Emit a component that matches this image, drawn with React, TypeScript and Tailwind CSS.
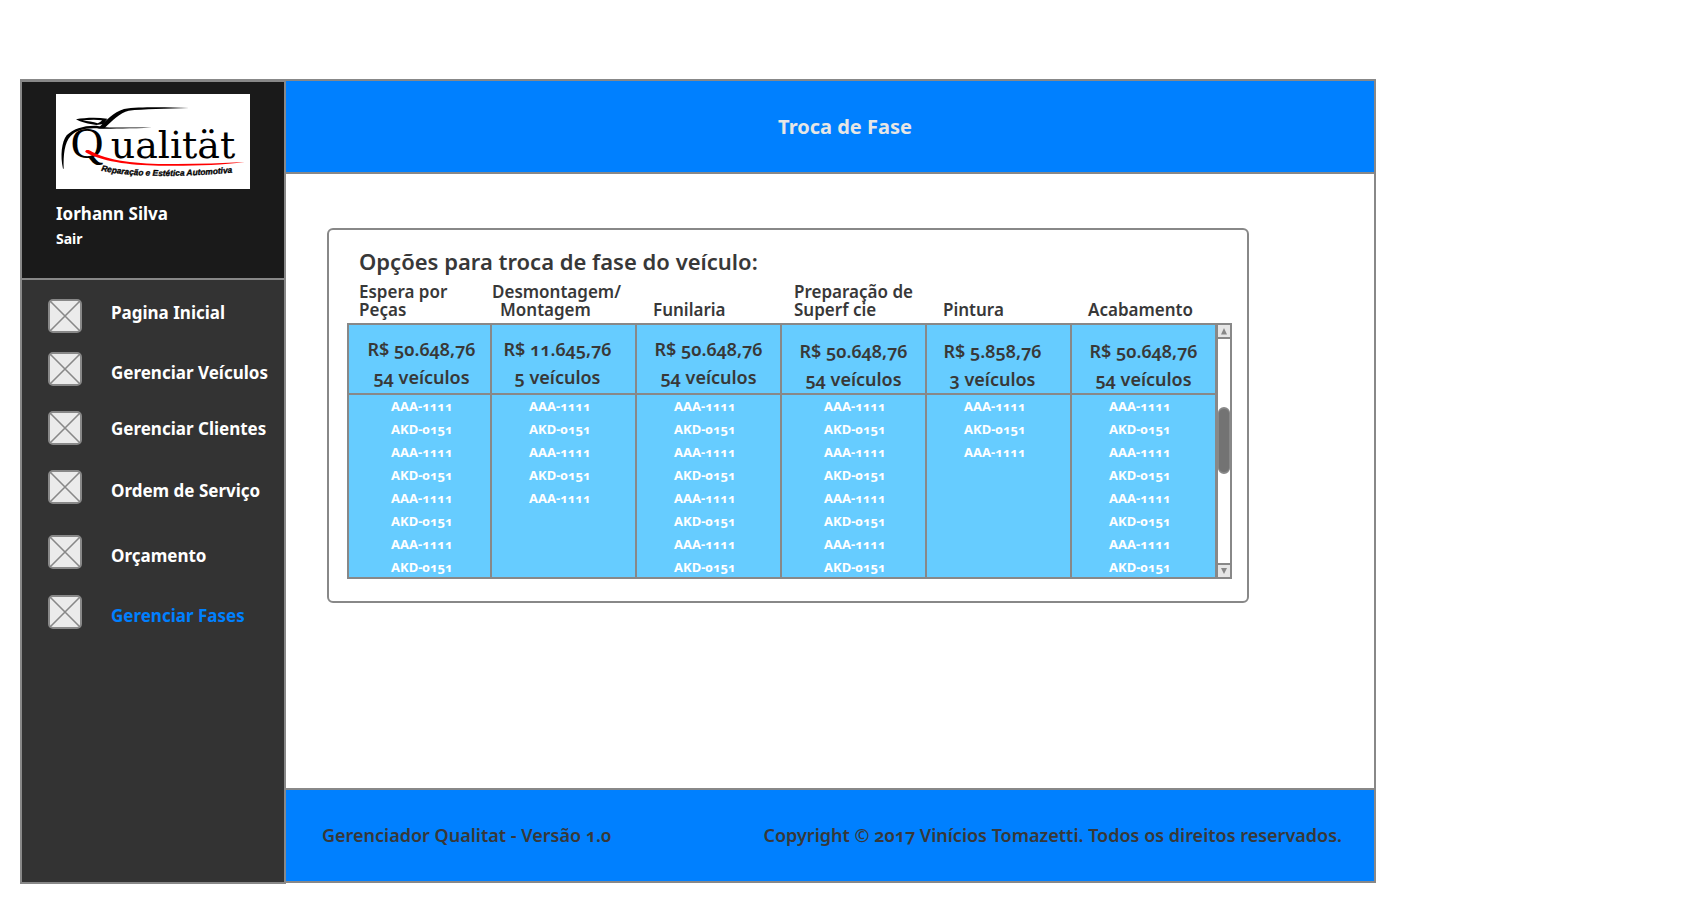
type NavItem = { label: string; row: string; text: string; active?: boolean };

const nav: NavItem[] = [
  { label: "Pagina Inicial", row: "mt-[19px]", text: "pb-1.5" },
  { label: "Gerenciar Veículos", row: "mt-[19px]", text: "pt-2" },
  { label: "Gerenciar Clientes", row: "mt-[25px]", text: "pt-0.5" },
  { label: "Ordem de Serviço", row: "mt-[25px]", text: "pt-2" },
  { label: "Orçamento", row: "mt-[31px]", text: "pt-2" },
  { label: "Gerenciar Fases", row: "mt-[26px]", text: "pt-2", active: true },
];

type Phase = {
  title: string[];
  head: string;
  amount: string;
  vehicles: string;
  summary: string;
  list: string;
  count: number;
};

const phases: Phase[] = [
  { title: ["Espera por", "Peças"], head: "pl-3", amount: "R$ 50.648,76", vehicles: "54 veículos", summary: "pt-2.5 pl-1", list: "pl-[42px]", count: 8 },
  { title: ["Desmontagem/", "Montagem"], head: "pl-0", amount: "R$ 11.645,76", vehicles: "5 veículos", summary: "pt-2.5 pr-3", list: "pl-[37px]", count: 5 },
  { title: ["Funilaria"], head: "pl-4", amount: "R$ 50.648,76", vehicles: "54 veículos", summary: "pt-2.5", list: "pl-[37px]", count: 8 },
  { title: ["Preparação de", "Superf cie"], head: "pl-3", amount: "R$ 50.648,76", vehicles: "54 veículos", summary: "pt-3", list: "pl-[42px]", count: 8 },
  { title: ["Pintura"], head: "pl-4", amount: "R$ 5.858,76", vehicles: "3 veículos", summary: "pt-3 pr-3", list: "pl-[37px]", count: 3 },
  { title: ["Acabamento"], head: "pl-4", amount: "R$ 50.648,76", vehicles: "54 veículos", summary: "pt-3", list: "pl-[37px]", count: 8 },
];

const plates = ["AAA-1111", "AKD-0151"];

function Logo() {
  return (
    <svg viewBox="18 18 582 285" className="block w-[194px] h-[95px] bg-white" role="img" aria-label="Qualität">
      <path d="M39 242 C30 205 35 160 50 142 C70 122 100 112 140 113 L158 117 C190 120 240 117 306 119 C240 121 190 122 150 122 C110 118 80 126 62 144 C43 165 40 200 41 242 Z" fill="#000" />
      <path d="M144 121 C168 98 190 72 222 63 C270 56 350 58 417 60 C350 63 280 63 236 68 C210 74 186 98 163 121 Z" fill="#000" />
      <path d="M78 94 C105 89 140 88 172 92 L160 108 L139 111 C116 108 92 103 78 94 Z M98 97 C112 101 130 101 143 106 C150 103 154 100 156 97 C140 94 118 95 98 97 Z" fill="#000" fillRule="evenodd" />
      <text x="62" y="210" fontFamily="'Liberation Serif', serif" fontSize="136" fontWeight="400" fill="#000">Q</text>
      <text x="182" y="209" fontFamily="'DejaVu Serif', serif" fontSize="114" fontWeight="400" fill="#000">ualität</text>
      <path d="M106 190 C108 184 118 186 126 191 C190 224 280 228 380 228 C450 228 520 226 584 222 C520 231 450 233 370 233 C270 235 170 226 112 196 C108 194 105 193 106 190 Z" fill="#f00" />
      <path id="tagline" d="M153 248 C240 268 400 268 545 254" fill="none" />
      <text fontFamily="'Liberation Sans', sans-serif" fontSize="25" fontWeight="700" fontStyle="italic" fill="#000" stroke="#000" strokeWidth="1">
        <textPath href="#tagline">Reparação e Estética Automotiva</textPath>
      </text>
    </svg>
  );
}

function CrossBox() {
  return (
    <svg viewBox="0 0 34 34" className="h-[34px] w-[34px] shrink-0" aria-hidden="true">
      <rect x="1" y="1" width="32" height="32" rx="4" fill="#ebebeb" stroke="#888" strokeWidth="2" />
      <path d="M2 2 L32 32 M32 2 L2 32" stroke="#888" strokeWidth="1.6" />
    </svg>
  );
}

function ScrollBar() {
  return (
    <div className="mt-10 flex w-[15px] shrink-0 flex-col border-2 border-l border-[#888] bg-white">
      <button type="button" aria-label="Rolar para cima" className="flex h-3.5 items-center justify-center border-b-2 border-[#888] bg-[#e6e6e6]">
        <svg viewBox="0 0 12 12" className="h-3 w-3"><path d="M6 3 L9 9.500 H3 Z" fill="#888" /></svg>
      </button>
      <div className="flex flex-1 flex-col">
        <div className="grow-[68]" />
        <div className="grow-[63] rounded-md border-2 border-x border-[#888] bg-[#737373]" />
        <div className="grow-[89]" />
      </div>
      <button type="button" aria-label="Rolar para baixo" className="flex h-3.5 items-center justify-center border-t-2 border-[#888] bg-[#e6e6e6]">
        <svg viewBox="0 0 12 12" className="h-3 w-3"><path d="M6 9 L9 3 H3 Z" fill="#888" /></svg>
      </button>
    </div>
  );
}

export default function App() {
  return (
    <div className="flex min-h-screen bg-white pt-[79px] pr-5 pb-5 pl-5 font-['Noto_Sans',sans-serif] text-lg font-semibold text-[#383838] oldstyle-nums">
      <div className="flex w-full max-w-[1356px]">
        <aside className="flex w-[266px] shrink-0 flex-col border-2 border-t-3 border-[#888] bg-[#333] font-bold text-white">
          <div className="border-b-2 border-[#888] bg-[#1a1a1a] pt-3 pb-[27px] pl-[34px]">
            <Logo />
            <p className="mt-3 text-[17px] leading-[25px]">Iorhann Silva</p>
            <a href="#sair" className="block text-sm leading-[25px]">Sair</a>
          </div>
          <nav className="pl-[26px]">
            <ul>
              {nav.map((item) => (
                <li key={item.label} className={item.row}>
                  <a href="#menu" className="flex items-center gap-[29px]">
                    <CrossBox />
                    <span className={`text-[17px] leading-6 whitespace-nowrap ${item.text} ${item.active ? "text-[#0080ff]" : ""}`}>{item.label}</span>
                  </a>
                </li>
              ))}
            </ul>
          </nav>
        </aside>

        <div className="mb-px flex min-w-0 flex-1 flex-col border-y-2 border-r-2 border-[#888]">
          <header className="flex h-[93px] items-center justify-center border-b-2 border-[#888] bg-[#0080ff] pl-[30px]">
            <h1 className="text-xl font-bold text-[#e6e6e6]">Troca de Fase</h1>
          </header>

          <main className="flex-1 pt-[54px] pr-5 pl-[41px]">
            <section className="max-w-[922px] rounded-md border-2 border-[#888] pt-[15px] pr-[15px] pb-[22px] pl-[18px]">
              <h2 className="mb-1.5 pl-3 text-[22px] leading-8">Opções para troca de fase do veículo:</h2>
              <div className="flex">
                <div className="min-w-0 flex-1">
                  <table className="w-full table-fixed border-separate border-spacing-0">
                    <thead>
                      <tr className="h-10">
                        {phases.map((p) => (
                          <th key={p.title[0]} scope="col" className={`pb-1 text-left align-bottom text-[17px] leading-[18px] font-semibold whitespace-nowrap ${p.head}`}>
                            {p.title.map((line) => (
                              <span key={line} className={line === "Montagem" ? "block pl-2" : "block"}>{line}</span>
                            ))}
                          </th>
                        ))}
                      </tr>
                    </thead>
                    <tbody className="bg-[#66ccff]">
                      <tr>
                        {phases.map((p) => (
                          <td key={p.title[0]} className={`h-[72px] border-y-2 border-r-2 border-[#888] text-center align-top leading-7 whitespace-nowrap first:border-l-2 ${p.summary}`}>
                            <div>{p.amount}</div>
                            <div>{p.vehicles}</div>
                          </td>
                        ))}
                      </tr>
                      <tr>
                        {phases.map((p) => (
                          <td key={p.title[0]} className={`border-r-2 border-b-2 border-[#888] align-top text-[13px] leading-[23px] font-bold text-white first:border-l-2 ${p.list}`}>
                            <ul className="-mb-0.5">
                              {Array.from({ length: p.count }, (_, i) => (
                                <li key={i}>{plates[i % 2]}</li>
                              ))}
                            </ul>
                          </td>
                        ))}
                      </tr>
                    </tbody>
                  </table>
                </div>
                <ScrollBar />
              </div>
            </section>
          </main>

          <footer className="flex h-[93px] shrink-0 items-center justify-between border-t-2 border-[#888] bg-[#0080ff] pr-8 pb-0.5 pl-9">
            <span>Gerenciador Qualitat - Versão 1.0</span>
            <span>Copyright © 2017 Vinícios Tomazetti. Todos os direitos reservados.</span>
          </footer>
        </div>
      </div>
    </div>
  );
}
